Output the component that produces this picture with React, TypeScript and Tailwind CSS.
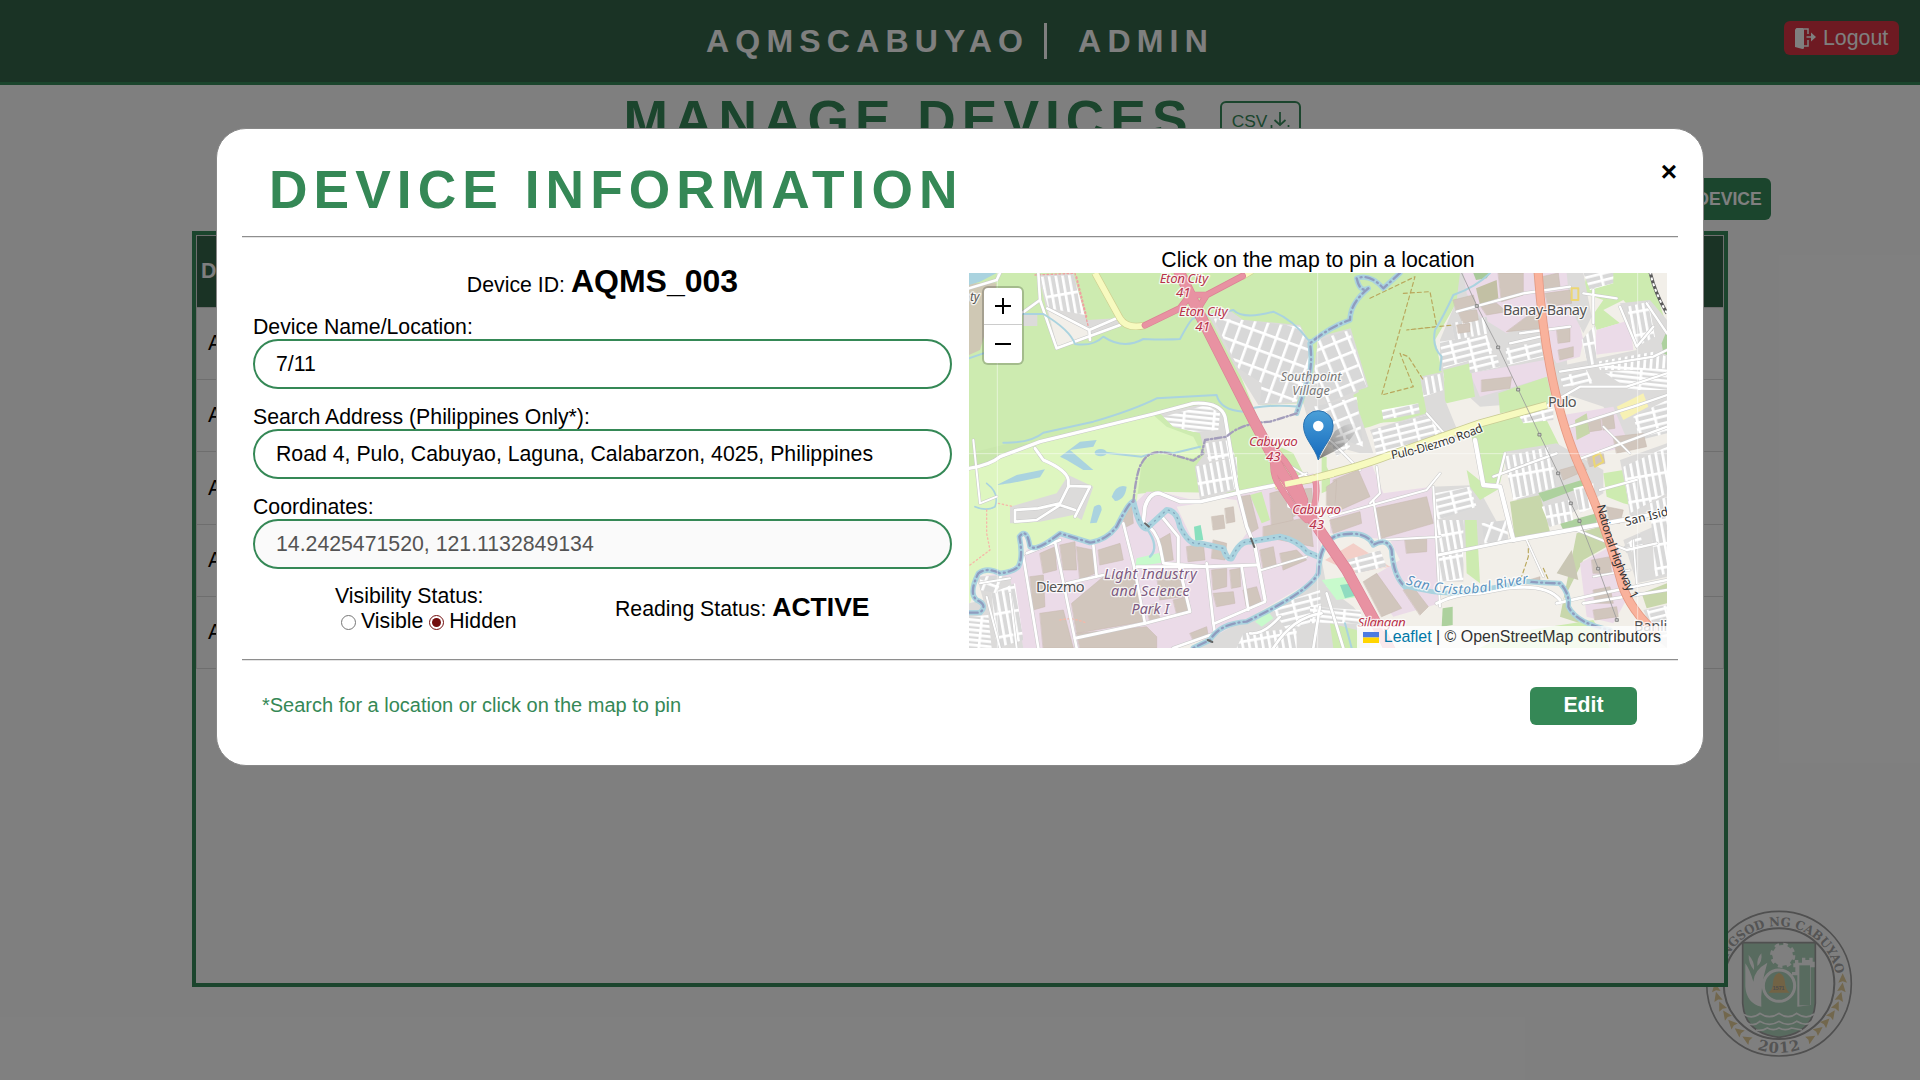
import React from "react";

const FONT = "font-['Liberation_Sans',Arial,sans-serif]";

/* ---------- Map ---------- */

type Shape = [string, string];

const GREEN = "#cdebb0";
const GOLF = "#def6c0";
const IND = "#ebdbe8";
const BLD = "#d1c6bd";
const RES = "#dcdbda";
const BEIGE = "#f2efe9";
const SCRUB = "#c8d7ab";
const WOOD = "#add19e";
const WATER = "#aad3df";

const areas: Shape[] = [
  [GREEN, "27,99 1560,99 1500,170 1425,300 1445,390 1470,480 1380,560 1220,600 1100,660 1060,720 835,760 590,755 27,820"],
  ["#cfc8b4", "27,130 110,130 90,230 60,330 27,345"],
  [WATER, "27,99 110,99 60,125 27,135"],
  [RES, "235,105 340,100 380,240 470,235 480,255 290,325 260,210"],
  [BEIGE, "262,205 385,265 385,290 292,320"],
  [RES, "190,225 232,225 232,258 190,258"],
  [GOLF, "27,685 130,650 240,605 580,525 620,560 700,590 725,640 700,655 580,640 545,670 530,785 490,850 430,900 390,910 310,880 220,930 205,880 185,880 180,970 120,1000 60,1000 30,1090 27,1090"],
  ["#c9e7ac", "27,685 130,650 215,610 150,610 27,640"],
  [BEIGE, "835,390 880,395 900,495 1030,490 1060,560 1150,580 1230,560 1400,500 1550,470 1620,520 1800,460 2121,480 2121,1224 1050,1224 1060,760 1000,640 920,600 880,500"],
  [RES, "745,225 800,205 850,240 1020,255 1045,300 1050,370 1010,490 895,495 830,390"],
  [RES, "1075,290 1172,265 1225,440 1180,465 1240,640 1200,640 1060,600 1030,490 1060,400"],
  [RES, "600,520 740,490 790,520 830,750 720,780 705,680 735,640 720,580 640,560"],
  [IND, "530,785 560,755 600,755 720,785 835,760 900,740 1060,700 1075,780 1085,960 1060,1020 890,1120 760,1190 640,1224 190,1224 150,1080 60,1010 120,1000 180,975 200,930 300,880 400,910 450,890"],
  [BEIGE, "650,800 720,790 745,770 830,780 860,880 810,950 790,905 700,905"],
  [RES, "27,1090 70,1080 50,1010 150,1010 190,1224 27,1224"],
  [GOLF, "27,1200 50,1200 60,1224 27,1224"],
  [RES, "760,1190 890,1120 1060,1030 1085,960 1100,1040 1180,1100 1230,1160 1230,1224 700,1224"],
  [RES, "1500,99 1800,99 1830,480 1560,500 1440,390 1440,300 1490,180"],
  [IND, "1510,99 1720,99 1735,230 1640,280 1560,230 1520,160"],
  [IND, "1740,99 1830,99 1840,180 1870,300 1860,350 1790,370 1745,300"],
  [GREEN, "1880,99 2070,99 2121,260 2050,250 1990,180 1930,210 1980,250 1910,270 1895,230 1930,180 1870,160"],
  [RES, "1820,99 1870,99 1895,230 1870,280 1830,200"],
  [IND, "1910,270 2010,240 2020,330 1900,345"],
  [RES, "1980,190 2070,180 2121,240 2121,560 2000,600 1930,500 1780,450 1790,380 2030,330"],
  [IND, "1530,400 1755,360 1765,410 1560,470"],
  [GREEN, "1450,390 1530,370 1545,470 1460,490"],
  [GREEN, "1195,450 1380,400 1440,500 1400,540 1230,550"],
  [RES, "1380,410 1450,395 1455,480 1500,590 1400,620 1260,640 1230,570 1400,520"],
  [GREEN, "1615,460 1760,410 1780,490 1620,520"],
  [GREEN, "1530,570 1740,500 1800,620 1640,640 1620,730 1570,730"],
  [IND, "1810,525 1960,500 2010,620 1850,650"],
  [SCRUB, "1845,540 1880,520 1890,580 1850,600"],
  ["#f7f1b4", "1970,500 2050,460 2065,500 1990,540"],
  [GREEN, "1085,650 1100,650 1100,680 1130,740 1085,760"],
  [IND, "1110,700 1230,660 1270,760 1415,740 1440,1010 1440,1090 1300,1130 1220,1020 1320,960 1290,900 1110,880"],
  [RES, "1415,740 1550,735 1640,900 1430,940"],
  [RES, "1430,840 1510,840 1510,1025 1430,1025"],
  [GREEN, "1520,690 1570,730 1620,745 1560,780 1530,740"],
  [GREEN, "1515,840 1550,840 1560,1030 1520,1000"],
  [RES, "1635,635 1790,610 1930,690 1930,760 1770,860 1660,770"],
  [SCRUB, "1650,785 1740,765 1770,875 1665,900"],
  [WOOD, "1735,760 1865,720 1870,740 1750,785"],
  [WOOD, "1800,850 1910,820 1910,860 1810,870"],
  [SCRUB, "1850,880 1920,860 1940,920 1870,960 1810,1080 1860,1150 1800,1130"],
  ["#c9c6b4", "1835,930 1855,1020 1790,1000"],
  [IND, "1860,970 1970,910 2010,1060 1960,1150 1880,1130"],
  [GREEN, "1930,700 1990,690 2000,760 2030,800 1990,790 1940,770"],
  [RES, "1980,660 2121,610 2121,800 2010,830 2000,760"],
  [RES, "1990,900 2080,860 2121,840 2121,1010 2030,1030"],
  [SCRUB, "2045,1060 2121,1030 2121,1090 2060,1105"],
  [RES, "2050,1110 2121,1095 2121,1224 2090,1200"],
  [GREEN, "1110,1150 1190,1170 1200,1224 1120,1224"],
  [GREEN, "1640,1180 1900,1140 1950,1224 1560,1224"],
  [WOOD, "1448,1105 1478,1100 1478,1155 1445,1160"],
  [GREEN, "870,765 905,755 930,840 905,850"],
  ["#c8facc", "530,955 600,938 605,968 525,980"],
  ["#c8facc", "885,1145 925,1115 940,1135 905,1160"],
  ["#c8facc", "1085,1020 1160,1010 1200,1070 1130,1080"],
  ["#88e0be", "702,860 722,855 730,900 706,903"],
  ["#8fdcc0", "1140,1035 1180,1030 1195,1065 1155,1075"],
  ["#f3cfc8", "1095,960 1180,910 1290,980 1180,1000"],
  [WOOD, "2121,270 2105,310 2110,340 2121,345"],
  ["#a9c99a", "1540,99 1590,99 1580,115 1548,120"],
  ["#c2c0a4", "1548,145 1610,120 1615,175 1560,195"],
];

const buildings = [
  "335,1090 430,1010 520,1000 550,1145 350,1180", "350,1180 560,1160 590,1190 590,1224 360,1224",
  "300,915 345,905 350,990 310,990", "350,920 400,930 405,1000 360,1020", "490,840 515,790 520,850 500,860",
  "240,940 285,920 290,990 250,1000", "210,1010 250,1005 255,1100 220,1110", "240,1120 310,1110 340,1224 250,1224",
  "415,930 480,910 490,960 420,975", "560,1100 590,1090 600,1140 570,1145", "640,1080 680,1070 690,1110 650,1120",
  "595,900 630,880 640,960 610,965", "680,920 730,910 735,960 685,965", "755,830 790,825 795,865 760,870",
  "795,805 820,800 825,845 800,850", "755,990 800,985 800,1040 760,1050", "810,990 840,985 842,1040 815,1045",
  "760,1060 820,1055 825,1090 770,1100", "850,1050 890,1040 905,1090 860,1100", "840,770 870,765 895,865 870,880",
  "930,760 985,745 1000,840 935,860", "990,750 1055,745 1060,800 1000,830", "910,860 1050,830 1060,920 910,890",
  "900,930 940,920 950,980 910,985", "960,940 1010,930 1040,960 970,990", "690,1180 740,1160 745,1190 700,1200",
  "1120,720 1195,690 1230,770 1130,815", "1245,805 1400,770 1420,850 1265,895", "1110,840 1200,815 1205,850 1120,880",
  "1335,900 1400,895 1400,935 1340,940", "1210,1025 1250,1000 1325,1105 1265,1130", "1330,1050 1355,1035 1405,1100 1380,1125",
  "1100,740 1130,720 1125,800 1100,800", "1480,180 1540,165 1550,200 1490,215", "1495,215 1550,210 1555,240 1510,250",
  "1490,255 1530,250 1530,275 1495,280", "1615,99 1690,99 1690,165 1625,185", "1560,195 1610,190 1640,215 1580,225",
  "1565,420 1655,410 1650,445 1565,455", "1745,110 1795,99 1800,140 1755,150", "1755,160 1830,150 1835,190 1765,200",
  "1790,265 1830,260 1830,305 1795,310", "1795,330 1840,320 1840,350 1800,360", "1700,230 1740,225 1745,265 1640,275",
  "1885,540 1920,530 1925,570 1890,575", "1925,530 1960,525 1965,565 1930,570", "1960,590 2050,580 2060,620 1970,640",
  "1800,690 1870,670 1880,690 1810,720", "1895,960 1950,950 1955,1000 1900,1000", "1900,1050 1950,1040 1960,1090 1905,1090",
  "1880,650 1930,640 1935,670 1890,680", "1900,1110 1970,1100 1975,1130 1905,1140", "1940,800 1990,810 1980,850 1950,850",
  "590,1000 660,990 670,1070 600,1080", "760,900 800,910 795,960 755,955", "1690,1035 1740,1020 1740,1010 1690,1025",
];

const hatched: Shape[] = [
  ["url(#hA)", "240,110 340,105 375,225 265,205"],
  ["url(#hB)", "760,235 850,240 1020,260 1043,310 1050,390 1010,485 900,490 905,430 835,385"],
  ["url(#hC)", "1075,300 1168,270 1220,440 1100,490 1060,420"],
  ["url(#hC)", "1060,500 1190,470 1210,620 1150,600 1070,560"],
  ["url(#hD)", "610,530 740,495 780,520 775,570 700,575 640,560"],
  ["url(#hA)", "705,680 830,650 835,745 720,770"],
  ["url(#hA)", "735,610 810,600 825,650 745,665"],
  ["url(#hD)", "27,1130 85,1125 95,1224 27,1224"],
  ["url(#hA)", "95,1060 165,1030 190,1200 110,1224"],
  ["url(#hB)", "60,1010 130,1005 110,1060 60,1050"],
  ["url(#hE)", "1440,305 1580,285 1600,340 1450,385"],
  ["url(#hA)", "1525,240 1580,230 1590,280 1535,290"],
  ["url(#hA)", "1475,250 1520,240 1530,290 1485,300"],
  ["url(#hE)", "1525,350 1610,345 1620,380 1530,400"],
  ["url(#hE)", "1635,325 1740,305 1750,350 1645,375"],
  ["url(#hA)", "1385,415 1448,400 1450,450 1390,470"],
  ["url(#hE)", "1235,570 1400,525 1480,600 1330,630 1250,650"],
  ["url(#hE)", "1265,510 1375,490 1380,520 1270,540"],
  ["url(#hA)", "1430,840 1510,840 1510,1020 1435,1025"],
  ["url(#hE)", "1425,760 1530,740 1550,800 1430,840"],
  ["url(#hB)", "1565,850 1640,840 1645,900 1575,920"],
  ["url(#hA)", "1630,650 1770,620 1790,740 1660,780"],
  ["url(#hA)", "1745,800 1830,780 1840,840 1770,860"],
  ["url(#hA)", "1840,745 1900,730 1905,800 1860,820"],
  ["url(#hA)", "1865,300 1905,255 1910,370 1885,380"],
  ["url(#hE)", "1870,99 1960,99 1960,130 1890,150"],
  ["url(#hA)", "2000,200 2065,185 2085,290 2030,320"],
  ["url(#hF)", "1910,365 2080,335 2121,350 2121,390 1920,390"],
  ["url(#hD)", "1930,395 2121,385 2121,450 2010,450"],
  ["url(#hE)", "2020,530 2121,480 2121,580 2040,600"],
  ["url(#hE)", "1800,410 1880,390 1900,430 1810,440"],
  ["url(#hA)", "1990,680 2121,620 2121,760 2010,820"],
  ["url(#hA)", "2070,790 2121,770 2121,1000 2085,1010"],
  ["url(#hE)", "1990,920 2040,880 2050,920 2000,940"],
  ["url(#hE)", "2060,1110 2121,1095 2121,1200 2080,1170"],
  ["url(#hE)", "930,1100 1080,1050 1085,1140 980,1170"],
  ["url(#hD)", "1050,1100 1200,1110 1210,1150 1050,1150"],
  ["url(#hA)", "850,1180 1010,1165 1010,1224 830,1224"],
  ["url(#hE)", "1110,600 1160,580 1170,620 1130,650"],
  ["url(#hE)", "1160,960 1260,930 1280,980 1190,1000"],
  ["url(#hE)", "1670,515 1780,505 1780,540 1690,550"],
];

const roads: [string, number][] = [
  ["M27 685 Q90 675 120 650 L240 605 L580 522 L700 490 Q780 485 795 530 L830 740 L860 860 L885 920 L915 1080", 10],
  ["M225 625 L250 660 Q320 690 325 720 L325 740", 9],
  ["M325 738 L390 740 L345 830 M325 740 L300 790 L235 805 L165 810 L165 845 L230 840 L300 795 L345 810", 8],
  ["M27 145 L110 120 L120 99 M185 220 L240 180 L235 99 M240 180 L290 325 L480 255 M262 205 L388 270 L470 235 M388 270 L390 300", 8],
  ["M550 845 L555 800 Q570 755 600 760 L660 785 L720 785 L835 758 L950 735", 11],
  ["M550 845 Q590 870 600 920 L610 970 L740 980 L890 975 M610 835 L655 890 L655 970 L690 1115 L555 1150 L345 1195", 9],
  ["M285 905 L350 1224 M190 950 L235 1224 M200 940 L300 900 M400 915 L410 1010 M320 1030 L430 1005 M490 850 L520 970 L555 1150", 8],
  ["M740 970 L760 1150 L765 1180 L640 1224 M740 980 L530 980 M845 980 L865 1110 M765 1150 L915 1085", 8],
  ["M950 735 L1040 700 M960 660 L1060 720 M980 750 L985 800 L1060 830 M905 990 L1040 950", 6],
  ["M1545 600 L1570 735 L1620 740 L1660 900", 13],
  ["M1660 900 L1830 870 L2121 815", 12],
  ["M1435 945 L1660 900 M1430 1090 Q1490 1060 1560 1060 L1640 1045 Q1760 1030 1800 1080", 9],
  ["M1790 1090 L1900 1065 L2121 1020 M1870 1090 L2121 1050", 8],
  ["M1110 830 L1400 750 L1440 700 M1240 780 L1260 900 L1440 890 M1420 740 L1440 1100", 6],
  ["M1490 215 L1690 160 L1830 140 M1680 280 L1830 260 M1650 310 L1740 290 M1800 395 L2080 350 L2121 330", 7],
  ["M1755 500 L1860 440 L2000 440 L2121 400 M1830 560 L2020 500 L2121 465 M1850 660 L2121 560", 7],
  ["M1600 710 L1790 640 M1635 640 L1610 740 M1920 750 L2030 720 M1850 870 L2000 930 L2090 910", 7],
  ["M1930 560 L2010 640 M2030 1030 L2020 900 M1900 1010 L2010 990 M1700 900 L1750 1010", 5],
  ["M1060 560 L1120 610 L1200 690 M1100 520 L1080 600 M1400 520 L1470 600 M1250 680 L1260 760 L1230 790", 6],
  ["M60 1030 L150 1015 M40 600 L60 790 L110 770 M80 1070 L120 1224 M150 1060 L170 1224", 6],
  ["M870 1180 Q910 1185 960 1130 M940 1224 Q1000 1130 1085 1120 M1100 1060 L1150 1224 M1060 1224 L1080 1100", 8],
  ["M1870 160 L1970 175 M1900 150 L1900 250 M1980 200 L2030 320 L2080 260 M2060 190 L2121 280", 7],
];

const navyRivers = [
  "M27 1118 L60 1118 Q85 1095 50 1080 Q25 1060 55 1000 Q80 980 120 1000 Q160 995 175 980 Q190 950 178 890 Q200 860 210 920 Q230 935 300 880 L390 908 Q440 900 470 860 Q510 780 520 785",
  "M1335 1040 Q1300 1010 1295 930 Q1280 890 1240 915 Q1220 870 1140 885 Q1080 895 1075 1000 Q1050 1050 890 1130 L860 1145 Q780 1150 750 1200 L700 1224",
  "M1705 1025 Q1770 1030 1800 1030 Q1830 1060 1825 1100 Q1850 1150 1950 1170",
  "M1320 99 L1270 145 Q1230 100 1190 115 Q1200 160 1225 145 Q1170 190 1170 240 Q1110 260 1050 310 Q1060 380 1040 430 L1010 520",
];

const streams = [
  "M190 222 L250 222 Q330 270 345 312 Q400 320 430 290 Q490 330 550 297 Q620 300 660 297 Q690 240 700 235 L820 210 Q850 240 940 215 Q1000 240 1045 300 L1075 300",
  "M130 608 Q210 610 250 578 L400 545 Q520 510 590 475 L770 465 Q780 510 850 515 Q900 490 1020 500",
  "M27 355 L70 340",
  "M1590 99 Q1550 140 1480 165 Q1450 230 1425 270 Q1415 320 1445 350 L1440 390",
  "M410 635 L545 650 Q600 630 640 640 L720 620",
  "M1155 1150 L1175 1224",
];

const canal = "M520 785 Q540 870 560 865 L620 810 Q650 810 660 860 Q690 920 720 910 L790 925 Q800 960 815 955 Q840 900 870 905 L960 890 Q1010 900 1040 935 L1075 950";
const ramps = "M555 256 L660 205 L690 165 L740 165 L848 108 M690 165 L665 200 M740 165 L715 205";
const loops = "M945 632 Q930 700 960 740 L1000 800 L1040 840 M948 632 Q1005 690 1035 780 M1065 715 Q1075 760 1062 800 L1055 840";
const motorway = "M650 80 L715 215 L880 540 L960 690 L1085 880 L1160 990 L1270 1190 L1290 1230";
const secondary = "M945 737 L1050 718 Q1200 680 1290 645 L1560 550 L1760 495";
const primary = "M1734 90 Q1745 250 1770 380 Q1800 540 1850 660 Q1940 860 1985 1030 Q2010 1110 2090 1180";

const pylons = [[1551, 198], [1615, 322], [1675, 449], [1739, 584], [1795, 700], [1833, 790], [1859, 843], [1915, 986], [1971, 1140]];

function Halo({ children, ...p }: React.SVGProps<SVGTextElement>) {
  return (
    <text textAnchor="middle" fontFamily="'Noto Sans', sans-serif" stroke="#ffffff" strokeOpacity={0.75} strokeWidth={8} strokeLinejoin="round" paintOrder="stroke" {...p}>
      {children}
    </text>
  );
}

function MapCanvas() {
  return (
    <svg className="block h-[375px] w-[698px]" viewBox="0 0 698 375">
      <defs>
        {[
          ["hA", 20, 70, -10], ["hB", 38, 52, 20], ["hC", 42, 44, -22], ["hD", 90, 15, 6], ["hE", 54, 20, -14], ["hF", 19, 60, 4],
        ].map(([id, w, h, r]) => (
          <pattern key={id} id={String(id)} width={w} height={h} patternUnits="userSpaceOnUse" patternTransform={`rotate(${r})`}>
            <rect width={w} height={h} fill="#d8d8d8" />
            <path d={`M0 4H${w}M4 0V${h}`} stroke="#fff" strokeWidth={8} />
          </pattern>
        ))}
        <linearGradient id="pin" x1="0" y1="0" x2="0" y2="1">
          <stop offset="0" stopColor="#4a9fd8" />
          <stop offset="0.9" stopColor="#1a6fc0" />
        </linearGradient>
        <linearGradient id="shade" x1="0" y1="1" x2="1" y2="0">
          <stop offset="0" stopColor="#000" stopOpacity="0.5" />
          <stop offset="1" stopColor="#000" stopOpacity="0" />
        </linearGradient>
        <path id="pd" d="M1296 658 Q1440 630 1590 566" />
        <path id="nh" d="M1910 797 Q1950 960 2018 1085" />
        <path id="si" d="M1998 858 L2200 807" />
        <path id="scr" d="M1337 1032 Q1400 1055 1480 1062 Q1560 1065 1640 1040 L1730 1026" />
      </defs>
      <rect width="698" height="375" fill={BEIGE} />
      <g transform="translate(-9 -33) scale(0.33333)" fill="none" strokeLinecap="round" strokeLinejoin="round">
        {areas.map(([f, p], i) => <polygon key={i} points={p} fill={f} />)}
        {hatched.map(([f, p], i) => <polygon key={i} points={p} fill={f} />)}
        {buildings.map((p, i) => <polygon key={i} points={p} fill={BLD} stroke="#c6b9ae" strokeWidth={1.5} />)}

        <polygon points="325,705 400,740 365,840 340,825 240,845 150,850 150,800 290,760" fill={RES} />
        <g fill={WATER}>
          <path d="M110 735 L170 705 L255 688 L240 712 L150 730 Z" />
          <path d="M300 650 L360 605 L410 600 L400 620 L330 630 L400 690 L370 690 L320 660 Z" />
          <path d="M455 770 Q470 730 500 740 Q495 780 465 783 Z" />
          <path d="M390 850 L402 800 Q425 785 425 810 L410 848 Z" />
          <ellipse cx="422" cy="638" rx="18" ry="11" />
        </g>
        <path d="M80 730 Q120 760 105 800 Q80 815 45 800" stroke={WATER} strokeWidth={5} />
        <path d="M115 790 L160 800 M80 810 L80 880 L90 930 L30 975 M300 1140 Q340 1130 380 1150" stroke="#f6b8a8" strokeWidth={4} strokeDasharray="4 8" />
        <path d="M225 105 L345 100 L385 260 M350 110 L380 230" stroke="#f0a0a0" strokeWidth={4} strokeDasharray="5 7" />
        <path d="M1230 175 L1365 110 L1300 340 L1265 465 L1360 440 L1320 340 L1345 350 L1390 420 M1330 160 L1410 155 L1430 260 L1340 270 L1480 255 M1705 905 L1705 950 L1685 1010 M1750 985 L1770 1030" stroke="#b9a75c" strokeWidth={3.5} strokeDasharray="12 9" />

        <g stroke="#c9c9c9">{roads.map(([d, w], i) => <path key={i} d={d} strokeWidth={w + 3} />)}</g>
        <g stroke="#ffffff">{roads.map(([d, w], i) => <path key={i} d={d} strokeWidth={w} />)}</g>

        <g stroke={WATER} strokeWidth={6}>{streams.map((d, i) => <path key={i} d={d} />)}</g>
        <path d={canal} stroke={WATER} strokeWidth={18} />
        <path d={canal} stroke="#84a6bd" strokeWidth={4} strokeDasharray="3 15" />
        <path d="M560 865 Q600 920 570 950" stroke={WATER} strokeWidth={7} />
        <g stroke={WATER} strokeWidth={16}>{navyRivers.map((d, i) => <path key={i} d={d} />)}</g>
        <g stroke="#8f9cbf" strokeWidth={7} strokeDasharray="26 12 3 12">{navyRivers.map((d, i) => <path key={i} d={d} />)}</g>
        <path d="M1010 520 L930 545 Q840 550 800 590 L735 600 L725 640 M520 785 Q530 690 545 670 Q570 620 640 645 L700 662 L730 640" stroke="#a39dbb" strokeWidth={7} strokeDasharray="20 8 4 8" />
        <path d="M1335 1038 Q1440 1065 1500 1058 T1705 1024" stroke={WATER} strokeWidth={14} />

        <path d="M405 99 L480 235 Q500 268 555 256 M845 110 L875 92" stroke="#cfcf90" strokeWidth={22} strokeLinecap="butt" />
        <path d="M405 99 L480 235 Q500 268 555 256 M845 110 L875 92" stroke="#f7fabf" strokeWidth={18} strokeLinecap="butt" />
        <path d={secondary} stroke="#c9cb94" strokeWidth={24} strokeLinecap="butt" />
        <path d={secondary} stroke="#f7fabf" strokeWidth={19} strokeLinecap="butt" />

        <g stroke="#dc8295">
          <path d={ramps} strokeWidth={20} />
          <path d={loops} strokeWidth={19} />
          <path d={motorway} strokeWidth={34} />
        </g>
        <g stroke="#e892a2">
          <path d={ramps} strokeWidth={16} />
          <path d={loops} strokeWidth={16} />
          <path d={motorway} strokeWidth={30} />
        </g>
        <path d="M975 733 L1050 718 L1120 702" stroke="#f7fabf" strokeWidth={17} strokeLinecap="butt" />
        <path d={primary} stroke="#e59a84" strokeWidth={27} strokeLinecap="butt" />
        <path d={primary} stroke="#f9b29c" strokeWidth={22} strokeLinecap="butt" />
        <path d="M2070 95 Q2085 160 2121 220" stroke="#5b5b5b" strokeWidth={10} strokeLinecap="butt" />
        <path d="M2070 95 Q2085 160 2121 220" stroke="#fff" strokeWidth={6} strokeDasharray="9 9" strokeLinecap="butt" />
        <path d="M1505 99 L1551 198 L1615 322 L1675 449 L1739 584 L1795 700 L1833 790 L1859 843 L1915 986 L1971 1140" stroke="#9a9a9a" strokeWidth={2.5} />
        {pylons.map(([x, y], i) => <rect key={i} x={x - 4} y={y - 4} width={8} height={8} fill="#ccc" stroke="#777" strokeWidth={2.5} />)}
        <path d="M1835 145 h20 v35 h-20z M1900 650 l20 -10 l10 25 l-25 15z" stroke="#ecd774" strokeWidth={6} />
        <path d="M743 1200 l14 6 M873 895 l10 26 M555 850 l12 10" stroke="#666" strokeWidth={6} />
        <g stroke="#fff" strokeOpacity={0.5} strokeWidth={3}>
          <path d="M112 99V1224M1073 99V1224M2033 99V1224M27 641H2121" />
        </g>

        <g stroke="none">
          <g fontStyle="italic" fill="#b8324a" fontSize={40}>
            <Halo x={672} y={129} textLength={146}>Eton City</Halo><Halo x={670} y={172}>41</Halo>
            <Halo x={730} y={228} textLength={146}>Eton City</Halo><Halo x={728} y={272}>41</Halo>
            <Halo x={940} y={617} textLength={146}>Cabuyao</Halo><Halo x={940} y={664}>43</Halo>
            <Halo x={1070} y={822} textLength={146}>Cabuyao</Halo><Halo x={1070} y={866}>43</Halo>
            <Halo x={1265} y={1160} textLength={144}>Silangan</Halo>
          </g>
          <g fontStyle="italic" fill="#777777" fontSize={38}>
            <Halo x={1053} y={422} textLength={182}>Southpoint</Halo><Halo x={1053} y={466}>Village</Halo>
          </g>
          <g fontStyle="italic" fill="#7c5a80" fontSize={43}>
            <Halo x={571} y={1017} textLength={278}>Light Industry</Halo>
            <Halo x={571} y={1069} textLength={236}>and Science</Halo>
            <Halo x={571} y={1122}>Park I</Halo>
          </g>
          <g fill="#555555" fontSize={44}>
            <Halo x={1755} y={226} textLength={252}>Banay-Banay</Halo>
            <Halo x={1807} y={502} textLength={86}>Pulo</Halo>
            <Halo x={301} y={1056} textLength={146}>Diezmo</Halo>
            <Halo x={2072} y={1172} textLength={100}>Banli</Halo>
            <Halo x={44} y={182} fontSize={36} fontStyle="italic">ty</Halo>
          </g>
          <g fill="#333333" fontSize={36}>
            <Halo textAnchor="start"><textPath href="#pd" textLength={288}>Pulo-Diezmo Road</textPath></Halo>
            <Halo textAnchor="start" strokeWidth={0}><textPath href="#nh" textLength={302}>National Highway 1</textPath></Halo>
            <Halo textAnchor="start"><textPath href="#si">San Isidro</textPath></Halo>
          </g>
          <Halo textAnchor="start" fontStyle="italic" fill="#5b93c0" fontSize={41}><textPath href="#scr" textLength={375}>San Cristobal River</textPath></Halo>
        </g>
      </g>
      <path d="M350 186 L366 158 Q384 146 388 154 Q384 168 366 178 Z" fill="url(#shade)" />
      <path d="M349.300 187 C346 174 334.500 166 334.500 152.500 A14.800 14.800 0 0 1 364.100 152.500 C364.100 166 352.500 174 349.300 187 Z" fill="url(#pin)" stroke="#2a72b0" strokeWidth="1" />
      <circle cx="349.300" cy="153" r="5.300" fill="#fff" />
    </svg>
  );
}

/* ---------- City seal ---------- */

function Seal() {
  const wheat = [
    [488, 265, 0], [486, 292, 8], [480, 320, 16], [470, 347, 25], [456, 373, 35], [438, 396, 44], [416, 420, 52], [393, 445, 60],
    [107, 292, -8], [112, 320, -16], [124, 348, -25], [138, 374, -35], [155, 400, -44], [176, 424, -52], [200, 447, -60],
  ];
  return (
    <svg className="absolute top-[890px] left-[1680px] size-[190px]" viewBox="0 0 570 570">
      <defs>
        <path id="sealTop" d="M131 330 A173 173 0 1 1 463 330" />
        <path id="sealBottom" d="M175 449 A207 207 0 0 0 419 449" />
      </defs>
      <circle cx="297" cy="281" r="217" fill="#fff" stroke="#a0a0a0" strokeWidth="5" />
      <circle cx="297" cy="281" r="166" fill="#fff" stroke="#a0a0a0" strokeWidth="6" />
      <g fontFamily="'DejaVu Serif', serif" fontWeight="bold" fill="#a8a8a8">
        <text fontSize="37"><textPath href="#sealTop" startOffset="50%" textAnchor="middle" textLength="486" lengthAdjust="spacingAndGlyphs">LUNGSOD NG CABUYAO</textPath></text>
        <text fontSize="44"><textPath href="#sealBottom" startOffset="50%" textAnchor="middle" textLength="132">2012</textPath></text>
      </g>
      <path d="M188 158H406V340Q400 430 297 442Q194 430 188 340Z" fill="#b1d6bf" stroke="#a0a0a0" strokeWidth="5" />
      <path d="M196 220Q210 240 220 275Q222 240 262 218Q240 290 244 350Q200 340 196 290Z M206 195Q225 215 222 240Q205 220 206 195Z M244 190Q248 215 232 228Q230 205 244 190Z" fill="#fff" />
      <circle cx="308" cy="196" r="31" fill="#fff" stroke="#fff" strokeWidth="14" strokeDasharray="12.500 12" />
      <path d="M340 220H345V210H355V218H366V203H376V210H388V203H398V215H404V232H392V345L352 350V256H336V246H346V232H340Z" fill="#fff" />
      <path d="M358 226H390V346H358Z" fill="#b1d6bf" />
      <circle cx="297" cy="287" r="47" fill="#b1d6bf" stroke="#fff" strokeWidth="9" />
      <path d="M297 248Q314 254 315 278Q316 298 329 308H265Q279 298 279 278Q280 254 297 248Z" fill="#e5c68a" />
      <text x="296" y="299" textAnchor="middle" fontSize="16" fontWeight="bold" fill="#9a9a9a">1571</text>
      <path d="M192 373Q215 390 240 370Q268 390 297 370Q325 390 350 370Q378 390 402 372M200 398Q220 412 240 394Q268 412 297 394Q325 412 350 394Q378 410 394 396M228 420Q245 424 262 414Q280 424 297 414Q315 424 335 414L366 420" fill="none" stroke="#fff" strokeWidth="5" />
      {wheat.map(([x, y, r], i) => (
        <path key={i} d="M0 -15L13 13L0 9L-13 13Z" transform={`translate(${x} ${y}) rotate(${r})`} fill="#e5cf9a" />
      ))}
    </svg>
  );
}

/* ---------- Page ---------- */

function Header() {
  return (
    <header className="flex h-[85px] items-center justify-center border-b-[3px] border-[#368a5a] bg-[#34664a] text-white">
      <div className="w-[260px]" />
      <h1 className="flex flex-1 items-center justify-center text-[32px] font-bold tracking-[6.2px]">
        <span>AQMSCABUYAO</span>
        <span className="mr-[31px] ml-[15px] h-9 w-[3px] bg-white" />
        <span>ADMIN</span>
      </h1>
      <div className="flex w-[260px] justify-end pr-[21px] pb-[6px]">
        <button className="flex h-[34px] w-[115px] items-center rounded-md bg-[#dc3545] pt-px pl-[11px] text-[21.33px]">
          <svg className="mr-[7px] size-[21px]" viewBox="0 0 21 21">
            <path d="M0 1.500 L1.500 0 H8 L9 0.500 V20.500 L7.500 21 L0 19 Z" fill="#fff" />
            <path d="M9 1 H13 V6 M13 12 V18 H9 M11.500 9 H18" fill="none" stroke="#fff" strokeWidth="1.500" />
            <path d="M16 4.500 L21 9 L16 13.500 Z" fill="#fff" />
          </svg>
          Logout
        </button>
      </div>
    </header>
  );
}

function DeviceTable() {
  return (
    <div className="relative z-10 mx-auto h-[756px] w-[1536px] border-4 border-[#368a5a] bg-white text-[21.28px]">
      <div className="flex h-[73px] items-center border border-[#ddd] bg-[#34664a] pl-[4px] font-bold text-white">DEVICE ID</div>
      {[1, 2, 3, 4, 5].map((n) => (
        <div key={n} className="flex h-[72.200px] items-center border-x border-b border-[#ddd] pt-px pl-[11px]">AQMS_00{n}</div>
      ))}
    </div>
  );
}

function Field({ label, value, disabled }: { label: string; value: string; disabled?: boolean }) {
  return (
    <label className="block h-[90px]">
      <span className="flex h-[27px] items-center pt-[2px] leading-[24px]">{label}</span>
      <input
        readOnly
        disabled={disabled}
        value={value}
        className="block h-[50px] w-full rounded-[25px] border-2 border-[#358856] bg-white px-[21px] disabled:bg-[#fafafa] disabled:text-[#545454]"
      />
    </label>
  );
}

function Radio({ checked }: { checked?: boolean }) {
  return checked ? (
    <span className="mt-[2px] flex size-[15px] items-center justify-center rounded-full border border-[#720c0c]">
      <span className="size-[9px] rounded-full bg-[#720c0c]" />
    </span>
  ) : (
    <span className="mt-[2px] size-[15px] rounded-full border border-[#767676]" />
  );
}

function Rule() {
  return <div className="h-[2px] border-t border-[#8e8e8e] bg-[#e4e4e4]" />;
}

function Modal() {
  return (
    <div className="mx-auto mt-[128px] h-[638px] w-[1488px] rounded-[30px] border border-[#888] bg-white px-[25px] text-[21.28px] text-black">
      <div className="flex h-[107px] justify-between">
        <h2 className="pt-[29px] pl-[27px] text-[53.33px] leading-[64px] font-bold tracking-[6.05px] text-[#358856]">DEVICE INFORMATION</h2>
        <span className="pt-[27px] pr-px text-[28px] leading-[32px] font-bold">×</span>
      </div>
      <Rule />
      <div className="flex h-[421px] pr-[10px] pl-[11px]">
        <div className="w-[699px]">
          <div className="flex h-[74px] items-baseline justify-center gap-[6px] pt-[23px]">
            <span>Device ID:</span>
            <b className="text-[32px] leading-[40px]">AQMS_003</b>
          </div>
          <Field label="Device Name/Location:" value="7/11" />
          <Field label="Search Address (Philippines Only*):" value="Road 4, Pulo, Cabuyao, Laguna, Calabarzon, 4025, Philippines" />
          <Field label="Coordinates:" value="14.2425471520, 121.1132849134" disabled />
          <div className="flex pl-[82px]">
            <div className="w-[280px] pt-[2px]">
              <div className="h-[25px] leading-[25px]">Visibility Status:</div>
              <div className="flex h-[25px] items-center pl-[6px] leading-[25px]">
                <Radio />
                <span className="mr-[6px] ml-[5px]">Visible</span>
                <Radio checked />
                <span className="ml-[5px]">Hidden</span>
              </div>
            </div>
            <div className="flex items-baseline gap-[6px] pt-[9px]">
              <span>Reading Status:</span>
              <b className="text-[26.5px] leading-[32px]">ACTIVE</b>
            </div>
          </div>
        </div>
        <div className="ml-[17px] w-[698px]">
          <div className="flex h-[35px] items-end justify-center leading-[25px]">Click on the map to pin a location</div>
          <div className="relative h-[375px] overflow-hidden">
            <MapCanvas />
            <div className="absolute top-[13px] left-[12.500px] flex w-[42px] flex-col overflow-hidden rounded-md border-2 border-black/20 bg-white bg-clip-padding">
              <span className="flex h-[37px] items-center justify-center border-b border-[#ccc]">
                <svg className="size-4" viewBox="0 0 16 16"><path d="M0 8H16M8 0V16" stroke="#000" strokeWidth="2" /></svg>
              </span>
              <span className="flex h-[38px] items-center justify-center">
                <svg className="size-4" viewBox="0 0 16 16"><path d="M0 8H16" stroke="#000" strokeWidth="2" /></svg>
              </span>
            </div>
            <div className="absolute right-0 bottom-0 flex h-[22px] items-center bg-white/80 px-[6px] text-[15.95px] whitespace-pre text-[#333]">
              <svg className="mr-[5px] h-[11px] w-4" viewBox="0 0 16 11"><path fill="#4c7be1" d="M0 0H16V5.500H0z" /><path fill="#ffd500" d="M0 5.500H16V11H0z" /></svg>
              <span className="text-[#0078a8]">Leaflet</span>
              <span>{" | © OpenStreetMap contributors"}</span>
            </div>
          </div>
        </div>
      </div>
      <Rule />
      <div className="flex items-center justify-between pt-[26px] pr-[41px] pl-[20px]">
        <span className="pb-[2px] text-[20px] text-[#358856]">*Search for a location or click on the map to pin</span>
        <button className="h-[38px] w-[107px] rounded-md bg-[#358856] font-bold text-white">Edit</button>
      </div>
    </div>
  );
}

export default function App() {
  return (
    <div className={`relative h-[1080px] w-[1920px] overflow-hidden bg-white ${FONT}`}>
      <Seal />
      <Header />
      <div className="flex h-[78px] items-start justify-center pt-[3px] pl-[5px]">
        <h2 className="text-[53.33px] leading-[64px] font-bold tracking-[6px] text-[#368a5a]">MANAGE DEVICES</h2>
        <div className="mt-[13px] ml-[27px] flex h-[41px] w-[81px] items-center justify-center rounded-md border-2 border-[#368a5a] text-[17.33px] text-[#368a5a]">
          CSV
          <svg className="ml-[3px] size-[20px]" viewBox="0 0 20 20" fill="none" stroke="currentColor" strokeWidth="1.700">
            <path d="M10 0V13M4.500 8L10 13L15.500 8" />
            <path d="M1.500 13V19H18.500V13" strokeDasharray="3 1.500" />
          </svg>
        </div>
      </div>
      <div className="flex h-[68px] justify-end pt-[15px] pr-[149px]">
        <button className="h-[42px] w-[130px] rounded-md bg-[#368a5a] pl-[3px] text-[17.600px] font-bold whitespace-nowrap text-white">ADD DEVICE</button>
      </div>
      <DeviceTable />
      <div className="absolute inset-0 z-20 overflow-hidden bg-black/50">
        <Modal />
      </div>
    </div>
  );
}
